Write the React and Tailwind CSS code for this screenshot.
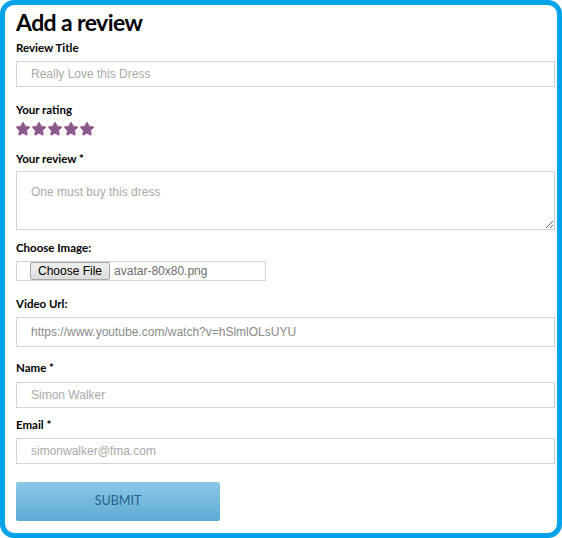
import { Star } from "lucide-react";

function Label({ children, className = "" }) {
  return (
    <div className={`h-4 leading-4 text-[11.5px] font-bold text-black ${className}`}>
      {children}
    </div>
  );
}

function TextInput({ placeholder, value, className = "" }) {
  return (
    <input
      placeholder={placeholder}
      defaultValue={value}
      className={`block w-full border border-[#d4d4d4] bg-white pl-[14px] text-[12px] text-[#8a8a8a] placeholder-[#a9a9a9] outline-none ${className}`}
      style={{ fontFamily: '"Liberation Sans", Arial, sans-serif' }}
    />
  );
}

export default function App() {
  return (
    <div className="w-[562px] h-[538px] bg-white">
      <div
        className="w-full h-full border-[5px] border-[#00a3e8] rounded-[14px] pl-[11px] pr-[2px] flex flex-col"
        style={{ fontFamily: '"Lato", "Open Sans", sans-serif' }}
      >
        <h1 className="h-[35px] leading-[35px] text-[23px] font-bold tracking-[-0.6px] text-black">Add a review</h1>

        <Label>Review Title</Label>
        <TextInput placeholder="Really Love this Dress" className="mt-[5px] h-[26px]" />

        <Label className="mt-[15px]">Your rating</Label>
        <div className="mt-[3px] h-4 flex items-center -ml-[1px]">
          {[0, 1, 2, 3, 4].map((i) => (
            <Star key={i} size={16} className="fill-[#8c5a8e] text-[#8c5a8e]" strokeWidth={1.5} />
          ))}
        </div>

        <Label className="mt-[14px]">Your review *</Label>
        <textarea
          placeholder="One must buy this dress"
          className="mt-1 block w-full h-[59px] border border-[#d4d4d4] pl-[14px] pt-[11px] text-[12px] placeholder-[#a9a9a9] outline-none"
          style={{ fontFamily: '"Liberation Sans", Arial, sans-serif' }}
        />

        <Label className="mt-[10px]">Choose Image:</Label>
        <div
          className="mt-[5px] w-[250px] h-[20px] border border-[#d4d4d4] flex items-center pl-[13px] text-[12px]"
          style={{ fontFamily: '"Liberation Sans", Arial, sans-serif' }}
        >
          <button className="h-[18px] px-[7px] leading-none border border-[#a6a6a6] rounded-[2px] bg-gradient-to-b from-[#f0f0f0] to-[#dcdcdc] text-black">
            Choose File
          </button>
          <span className="ml-[4px] text-[#6e6e6e]">avatar-80x80.png</span>
        </div>

        <Label className="mt-[15px]">Video Url:</Label>
        <TextInput
          value="https://www.youtube.com/watch?v=hSlmlOLsUYU"
          className="mt-[5px] h-[30px]"
        />

        <Label className="mt-[13px]">Name *</Label>
        <TextInput placeholder="Simon Walker" className="mt-[6px] h-[26px]" />

        <Label className="mt-[9px]">Email *</Label>
        <TextInput placeholder="simonwalker@fma.com" className="mt-[5px] h-[26px]" />

        <button className="mt-[18px] w-[204px] h-[39px] rounded-[2px] bg-gradient-to-b from-[#8cc8e7] to-[#5eaad6] text-[12.5px] text-[#2b5e84]">
          SUBMIT
        </button>
      </div>
    </div>
  );
}
